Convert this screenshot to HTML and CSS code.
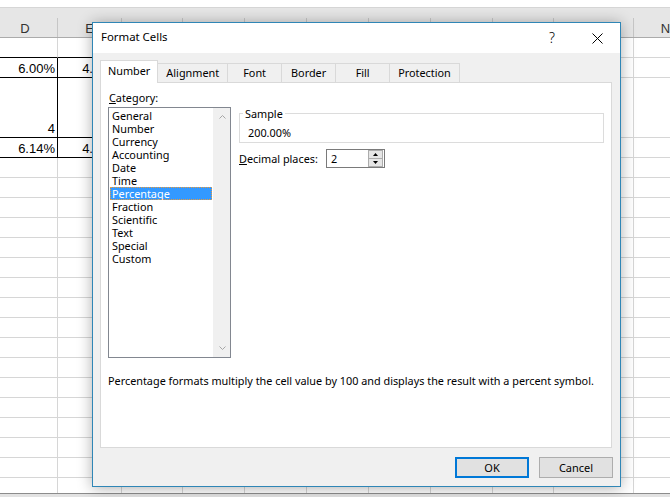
FILE: index.html
```html
<!DOCTYPE html>
<html lang="en">
<head>
<meta charset="utf-8">
<title>Format Cells</title>
<link rel="stylesheet" href="styles.css">
</head>
<body>
<div class="app">
  <div class="sheet">
    <div class="topstrip"></div>
    <div class="band"></div>
    <div class="colhead">
      <span class="ch">D</span><span class="ch">E</span><span class="ch">F</span><span class="ch">G</span><span class="ch">H</span><span class="ch">I</span><span class="ch">J</span><span class="ch">K</span><span class="ch">L</span><span class="ch">M</span><span class="ch">N</span>
    </div>
    <div class="grid">
      <span class="c bb"></span><span class="c bb"></span><span class="c"></span><span class="c"></span><span class="c"></span><span class="c"></span><span class="c"></span><span class="c"></span><span class="c"></span><span class="c"></span><span class="c"></span>
      <span class="c n bb br">6.00%</span><span class="c n bb br">4.25%</span><span class="c"></span><span class="c"></span><span class="c"></span><span class="c"></span><span class="c"></span><span class="c"></span><span class="c"></span><span class="c"></span><span class="c"></span>
      <span class="c n bb br">4</span><span class="c n bb br">3</span><span class="c"></span><span class="c"></span><span class="c"></span><span class="c"></span><span class="c"></span><span class="c"></span><span class="c"></span><span class="c"></span><span class="c"></span>
      <span class="c n bb br">6.14%</span><span class="c n bb br">4.27%</span><span class="c"></span><span class="c"></span><span class="c"></span><span class="c"></span><span class="c"></span><span class="c"></span><span class="c"></span><span class="c"></span><span class="c"></span>
      <span class="c"></span><span class="c"></span><span class="c"></span><span class="c"></span><span class="c"></span><span class="c"></span><span class="c"></span><span class="c"></span><span class="c"></span><span class="c"></span><span class="c"></span>
      <span class="c"></span><span class="c"></span><span class="c"></span><span class="c"></span><span class="c"></span><span class="c"></span><span class="c"></span><span class="c"></span><span class="c"></span><span class="c"></span><span class="c"></span>
      <span class="c"></span><span class="c"></span><span class="c"></span><span class="c"></span><span class="c"></span><span class="c"></span><span class="c"></span><span class="c"></span><span class="c"></span><span class="c"></span><span class="c"></span>
      <span class="c"></span><span class="c"></span><span class="c"></span><span class="c"></span><span class="c"></span><span class="c"></span><span class="c"></span><span class="c"></span><span class="c"></span><span class="c"></span><span class="c"></span>
      <span class="c"></span><span class="c"></span><span class="c"></span><span class="c"></span><span class="c"></span><span class="c"></span><span class="c"></span><span class="c"></span><span class="c"></span><span class="c"></span><span class="c"></span>
      <span class="c"></span><span class="c"></span><span class="c"></span><span class="c"></span><span class="c"></span><span class="c"></span><span class="c"></span><span class="c"></span><span class="c"></span><span class="c"></span><span class="c"></span>
      <span class="c"></span><span class="c"></span><span class="c"></span><span class="c"></span><span class="c"></span><span class="c"></span><span class="c"></span><span class="c"></span><span class="c"></span><span class="c"></span><span class="c"></span>
      <span class="c"></span><span class="c"></span><span class="c"></span><span class="c"></span><span class="c"></span><span class="c"></span><span class="c"></span><span class="c"></span><span class="c"></span><span class="c"></span><span class="c"></span>
      <span class="c"></span><span class="c"></span><span class="c"></span><span class="c"></span><span class="c"></span><span class="c"></span><span class="c"></span><span class="c"></span><span class="c"></span><span class="c"></span><span class="c"></span>
      <span class="c"></span><span class="c"></span><span class="c"></span><span class="c"></span><span class="c"></span><span class="c"></span><span class="c"></span><span class="c"></span><span class="c"></span><span class="c"></span><span class="c"></span>
      <span class="c"></span><span class="c"></span><span class="c"></span><span class="c"></span><span class="c"></span><span class="c"></span><span class="c"></span><span class="c"></span><span class="c"></span><span class="c"></span><span class="c"></span>
      <span class="c"></span><span class="c"></span><span class="c"></span><span class="c"></span><span class="c"></span><span class="c"></span><span class="c"></span><span class="c"></span><span class="c"></span><span class="c"></span><span class="c"></span>
      <span class="c"></span><span class="c"></span><span class="c"></span><span class="c"></span><span class="c"></span><span class="c"></span><span class="c"></span><span class="c"></span><span class="c"></span><span class="c"></span><span class="c"></span>
      <span class="c"></span><span class="c"></span><span class="c"></span><span class="c"></span><span class="c"></span><span class="c"></span><span class="c"></span><span class="c"></span><span class="c"></span><span class="c"></span><span class="c"></span>
      <span class="c"></span><span class="c"></span><span class="c"></span><span class="c"></span><span class="c"></span><span class="c"></span><span class="c"></span><span class="c"></span><span class="c"></span><span class="c"></span><span class="c"></span>
      <span class="c"></span><span class="c"></span><span class="c"></span><span class="c"></span><span class="c"></span><span class="c"></span><span class="c"></span><span class="c"></span><span class="c"></span><span class="c"></span><span class="c"></span>
      <span class="c"></span><span class="c"></span><span class="c"></span><span class="c"></span><span class="c"></span><span class="c"></span><span class="c"></span><span class="c"></span><span class="c"></span><span class="c"></span><span class="c"></span>
    </div>
    <div class="hscroll"></div>
  </div>

  <div class="dialog">
    <div class="titlebar">
      <span class="title">Format Cells</span>
      <span class="tbtn help">?</span>
      <span class="tbtn close"><svg width="11" height="11" viewBox="0 0 11 11"><path d="M0.5 0.5L10.5 10.5M10.5 0.5L0.5 10.5" stroke="#000" stroke-width="1" fill="none"/></svg></span>
    </div>
    <div class="body">
      <div class="tabs">
        <div class="tab active">Number</div>
        <div class="tab">Alignment</div>
        <div class="tab">Font</div>
        <div class="tab">Border</div>
        <div class="tab">Fill</div>
        <div class="tab">Protection</div>
      </div>
      <div class="panel">
        <div class="cols">
          <div class="left">
            <div class="lbl"><u>C</u>ategory:</div>
            <div class="list">
              <ul class="items">
                <li>General</li>
                <li>Number</li>
                <li>Currency</li>
                <li>Accounting</li>
                <li>Date</li>
                <li>Time</li>
                <li class="sel">Percentage</li>
                <li>Fraction</li>
                <li>Scientific</li>
                <li>Text</li>
                <li>Special</li>
                <li>Custom</li>
              </ul>
              <div class="vscroll">
                <svg width="7" height="4" viewBox="0 0 7 4"><path d="M0.5 3.5L3.5 0.5L6.5 3.5" stroke="#a6a6a6" fill="none"/></svg>
                <svg width="7" height="4" viewBox="0 0 7 4"><path d="M0.5 0.5L3.5 3.5L6.5 0.5" stroke="#a6a6a6" fill="none"/></svg>
              </div>
            </div>
          </div>
          <div class="right">
            <fieldset class="sample">
              <legend class="legend">Sample</legend>
              <div class="sval">200.00%</div>
            </fieldset>
            <div class="dec">
              <span class="declbl"><u>D</u>ecimal places:</span>
              <div class="spin">
                <span class="sv">2</span>
                <div class="spbtns">
                  <span class="spb"><svg width="5" height="3" viewBox="0 0 5 3"><path d="M0 3L2.5 0L5 3Z" fill="#000"/></svg></span>
                  <span class="spb"><svg width="5" height="3" viewBox="0 0 5 3"><path d="M0 0L2.5 3L5 0Z" fill="#000"/></svg></span>
                </div>
              </div>
            </div>
          </div>
        </div>
        <p class="desc">Percentage formats multiply the cell value by 100 and displays the result with a percent symbol.</p>
      </div>
      <div class="footer">
        <button class="btn ok">OK</button>
        <button class="btn">Cancel</button>
      </div>
    </div>
  </div>
</div>
</body>
</html>
```

FILE: styles.css
```css
* { box-sizing: border-box; }
html, body { margin: 0; padding: 0; }
body {
  width: 670px;
  height: 497px;
  overflow: hidden;
  background: #fff;
  font-family: "Liberation Sans", Arial, sans-serif;
}
.app {
  position: relative;
  width: 670px;
  height: 497px;
  overflow: hidden;
}

/* ---------- spreadsheet ---------- */
.sheet {
  display: flex;
  flex-direction: column;
  height: 497px;
}
.topstrip {
  height: 8px;
  flex: none;
  background: #fff;
  border-bottom: 1px solid #d6d6d6;
}
.band {
  height: 10px;
  flex: none;
  background: #e6e6e6;
}
.colhead {
  flex: none;
  height: 20px;
  margin-left: -7px;
  display: grid;
  grid-template-columns: 65px 64px 61px 62px 62px 62px 62px 62px 61px 80px 64px;
  background: #e6e6e6;
  border-bottom: 1px solid #ababab;
}
.ch {
  border-right: 1px solid #c6c6c6;
  display: flex;
  align-items: center;
  justify-content: center;
  font-size: 13px;
  line-height: 15px;
  color: #333;
  padding-top: 1px;
}
.grid {
  flex: none;
  height: 455px;
  overflow: hidden;
  margin-left: -7px;
  display: grid;
  grid-template-columns: 65px 64px 61px 62px 62px 62px 62px 62px 61px 80px 64px;
  grid-template-rows: 20px 20px 60px 20px;
  grid-auto-rows: 20px;
}
.c {
  border-right: 1px solid #d6d6d6;
  border-bottom: 1px solid #d6d6d6;
}
.n {
  display: flex;
  align-items: flex-end;
  justify-content: flex-end;
  padding: 0 2px 1px 0;
  font-size: 13px;
  line-height: 15px;
  color: #000;
}
.bb { border-bottom-color: #000; }
.br { border-right-color: #000; }
.hscroll {
  flex: none;
  height: 4px;
  background: #e2e2e2;
  border-top: 1px solid #8c8c8c;
}

/* ---------- dialog ---------- */
.dialog {
  position: absolute;
  left: 92px;
  top: 22px;
  width: 529px;
  height: 465px;
  border: 1px solid #2f86b6;
  background: #f0f0f0;
  box-shadow: 0 1px 14px rgba(0, 0, 0, 0.32);
  display: flex;
  flex-direction: column;
  font-family: "Noto Sans", "Open Sans", sans-serif;
  font-size: 10.85px;
  color: #000;
}
.titlebar {
  flex: none;
  height: 30px;
  background: #fff;
  display: flex;
  align-items: center;
}
.title {
  flex: 1;
  padding: 0 0 3px 8px;
  font-size: 11.4px;
  line-height: 15px;
}
.tbtn {
  width: 46px;
  height: 30px;
  display: flex;
  align-items: center;
  justify-content: center;
}
.help {
  font-size: 14px;
  font-weight: 300;
  padding: 0 0 2px 2px;
}
.body {
  flex: 1;
  padding: 7px 8px 0 7px;
  display: flex;
  flex-direction: column;
}
.tabs {
  flex: none;
  display: flex;
  align-items: flex-end;
  height: 23px;
  margin-bottom: -1px;
}
.tab {
  min-width: 55px;
  height: 20px;
  padding: 0 8px;
  margin-right: -1px;
  border: 1px solid #d9d9d9;
  border-bottom: none;
  background: #f0f0f0;
  text-align: center;
  line-height: 18px;
  white-space: nowrap;
}
.tab.active {
  height: 23px;
  padding: 0 7px;
  background: #fff;
  position: relative;
  z-index: 1;
  line-height: 20px;
}
.panel {
  position: relative;
  flex: none;
  height: 366px;
  background: #fff;
  border: 1px solid #d9d9d9;
  padding: 8px 7px 0 7px;
}
.cols {
  display: flex;
  gap: 8px;
}
.lbl {
  line-height: 13px;
  padding-left: 1px;
  margin-bottom: 3px;
}
.list {
  width: 123px;
  height: 251px;
  border: 1px solid #828790;
  display: flex;
  background: #fff;
}
.items {
  list-style: none;
  margin: 0;
  padding: 1px 1px 0 1px;
  flex: 1;
}
.items li {
  height: 13px;
  line-height: 13px;
  padding-left: 2px;
  white-space: nowrap;
}
.items li.sel {
  background: #3399ff;
  color: #fff;
  outline: 1px dotted #e99a3c;
  outline-offset: -1px;
}
.vscroll {
  width: 17px;
  background: #f0f0f0;
  display: flex;
  flex-direction: column;
  justify-content: space-between;
  align-items: center;
  padding: 7px 0 7px 1px;
}
.right {
  display: flex;
  flex-direction: column;
}
.sample {
  width: 365px;
  margin: 16px 0 0 0;
  padding: 0 0 3px 3px;
  border: 1px solid #dcdcdc;
  min-width: 0;
}
.legend {
  padding: 0 2px;
  line-height: 13px;
}
.sval {
  margin: 6px 0 0 5px;
  line-height: 13px;
}
.dec {
  display: flex;
  align-items: center;
  margin-top: 6px;
  height: 19px;
}
.declbl {
  width: 87px;
  line-height: 13px;
}
.spin {
  width: 59px;
  height: 19px;
  border: 1px solid #7a7a7a;
  background: #fff;
  display: flex;
  align-items: center;
}
.sv {
  flex: 1;
  padding-left: 4px;
  line-height: 13px;
}
.spbtns {
  width: 15px;
  height: 17px;
  margin-right: 1px;
  display: flex;
  flex-direction: column;
}
.spb {
  flex: 1;
  display: flex;
  align-items: center;
  justify-content: center;
  background: #e5e5e5;
  border: 1px solid #acacac;
}
.spb + .spb { border-top: none; }
.desc {
  margin: 16px 0 0 0;
  line-height: 13px;
  white-space: nowrap;
}
.footer {
  flex: none;
  display: flex;
  justify-content: flex-end;
  gap: 10px;
  margin: 9px -1px 0 0;
}
.btn {
  width: 74px;
  height: 21px;
  padding: 0;
  border: 1px solid #adadad;
  background: #e1e1e1;
  font-family: "Noto Sans", "Open Sans", sans-serif;
  font-size: 11px;
  color: #000;
  line-height: 17px;
}
.btn.ok {
  border: 2px solid #0078d7;
}
```
